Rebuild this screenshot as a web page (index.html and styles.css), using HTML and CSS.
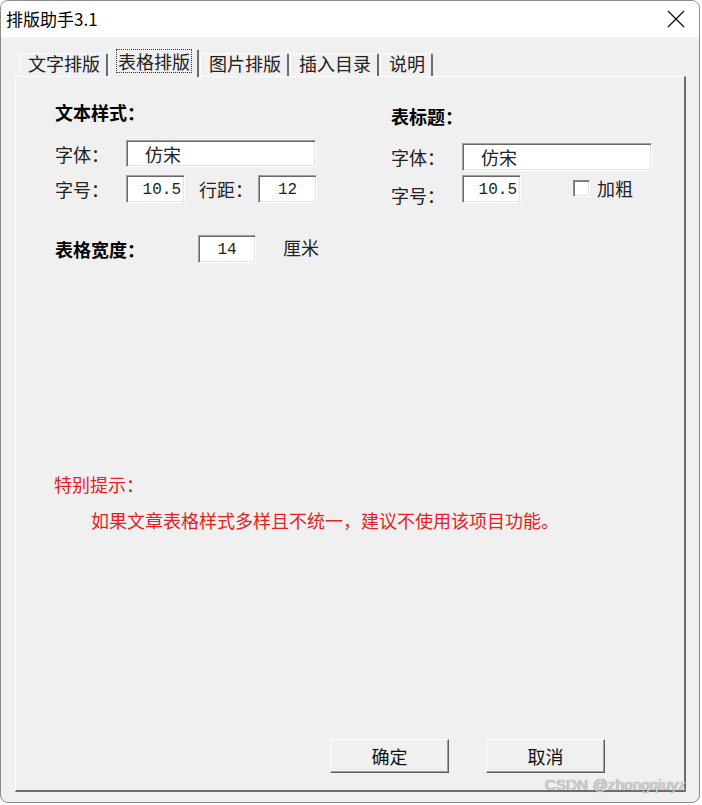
FILE: index.html
```html
<!DOCTYPE html>
<html lang="zh-CN">
<head>
    <meta charset="UTF-8">
    <meta name="viewport" content="width=device-width, initial-scale=1.0">
    <title>排版助手3.1</title>
    <link rel="stylesheet" href="styles.css">
</head>
<body>

    <div class="window">
        <div class="titlebar">
            <span class="title">排版助手3.1</span>
            <svg class="close" width="18" height="18" viewBox="0 0 18 18">
                <path d="M1 1 L17 17 M17 1 L1 17" stroke="#111" stroke-width="1.3" fill="none"/>
            </svg>
        </div>

        <div class="client">
            <div class="tabs">
                <div class="tab">文字排版</div>
                <div class="tab active"><span class="focus">表格排版</span></div>
                <div class="tab">图片排版</div>
                <div class="tab">插入目录</div>
                <div class="tab">说明</div>
            </div>

            <div class="panel">
                <div class="columns">
                    <div class="col">
                        <div class="heading">文本样式：</div>
                        <div class="row row-font">
                            <span class="label">字体：</span>
                            <div class="field wide">仿宋</div>
                        </div>
                        <div class="row row-size">
                            <span class="label">字号：</span>
                            <div class="field num right">10.5</div>
                            <span class="label label-gap">行距：</span>
                            <div class="field num center">12</div>
                        </div>
                    </div>

                    <div class="col col-right">
                        <div class="heading">表标题：</div>
                        <div class="row row-font">
                            <span class="label">字体：</span>
                            <div class="field wide">仿宋</div>
                        </div>
                        <div class="row row-size">
                            <span class="label label-low">字号：</span>
                            <div class="field num right">10.5</div>
                            <label class="check">
                                <span class="box"></span>
                                <span>加粗</span>
                            </label>
                        </div>
                    </div>
                </div>

                <div class="row width-row">
                    <span class="heading width-label">表格宽度：</span>
                    <div class="field num center">14</div>
                    <span class="unit">厘米</span>
                </div>

                <div class="tip-title">特别提示：</div>
                <div class="tip-text">如果文章表格样式多样且不统一，建议不使用该项目功能。</div>

                <div class="buttons">
                    <button type="button">确定</button>
                    <button type="button">取消</button>
                </div>

                <div class="watermark">CSDN @zhongqiuyz</div>
            </div>
        </div>
    </div>

</body>
</html>
```

FILE: styles.css
```css
body {
    margin: 0;
    padding: 0;
    background-color: #fff;
    font-family: "Noto Sans CJK SC", "Liberation Sans", sans-serif;
    color: #000;
}

.window {
    width: 700px;
    height: 803px;
    box-sizing: border-box;
    border: 1px solid #8c8c8c;
    border-radius: 8px;
    background-color: #f0f0f0;
    overflow: hidden;
}

.titlebar {
    height: 36px;
    background-color: #fff;
    display: flex;
    align-items: center;
    justify-content: space-between;
    padding: 0 14px 0 5px;
}

.title {
    font-size: 17px;
    line-height: 20px;
}

.client {
    padding-top: 12px;
}

/* tab strip */
.tabs {
    display: flex;
    align-items: flex-end;
    gap: 1px;
    margin-left: 18px;
    height: 27px;
    position: relative;
    z-index: 1;
}

.tab {
    height: 23px;
    box-sizing: border-box;
    padding: 0 6px 0 8px;
    font-size: 18px;
    line-height: 19px;
    color: #222;
    background-color: #f0f0f0;
    border-top: 1px solid #fff;
    border-left: 1px solid #fff;
    border-right: 2px solid #6d6d6d;
    border-radius: 2px 2px 0 0;
}

.tab.active {
    height: 28px;
    margin-bottom: -1px;
    padding: 1px 7px 0 8px;
    line-height: 20px;
}

.focus {
    display: inline-block;
    outline: 1px dotted #333;
    outline-offset: 1px;
    line-height: 20px;
}

/* tab page */
.panel {
    position: relative;
    margin-left: 14px;
    width: 671px;
    height: 716px;
    box-sizing: border-box;
    border-top: 1px solid #fff;
    border-left: 1px solid #fff;
    border-right: 2px solid #6d6d6d;
    border-bottom: 2px solid #6d6d6d;
    padding: 25px 0 17px 39px;
    display: flex;
    flex-direction: column;
    font-size: 18px;
}

.columns {
    display: grid;
    grid-template-columns: 336px 1fr;
}

.heading {
    font-weight: bold;
    line-height: 20px;
}

.col-right .heading {
    margin-top: 4px;
}

.row {
    display: flex;
    align-items: center;
}

.row-font {
    margin-top: 18px;
    height: 27px;
}

.row-size {
    margin-top: 8px;
    height: 28px;
}

.col-right .row-font {
    margin-top: 17px;
    height: 28px;
}

.col-right .row-size {
    margin-top: 4px;
}

.label {
    width: 71px;
    flex-shrink: 0;
    line-height: 20px;
    color: #222;
}

.label-gap {
    margin-left: 14px;
    width: 59px;
}

.label-low {
    padding-top: 12px;
}

.field {
    height: 100%;
    box-sizing: border-box;
    background-color: #fff;
    border: 1px solid;
    border-color: #a0a0a0 #fff #fff #a0a0a0;
    box-shadow: inset 1px 1px #696969, inset -1px -1px #e3e3e3;
    display: flex;
    align-items: center;
    line-height: 20px;
    color: #222;
}

.field.wide {
    width: 190px;
    padding-left: 18px;
}

.field.num {
    width: 59px;
    font-family: "Liberation Mono", monospace;
    font-size: 16px;
    padding: 1px 3px 0;
}

.field.right {
    justify-content: flex-end;
}

.field.center {
    justify-content: center;
}

.check {
    display: flex;
    align-items: center;
    gap: 7px;
    margin-left: 52px;
    margin-top: -2px;
    color: #222;
}

.box {
    width: 17px;
    height: 17px;
    box-sizing: border-box;
    background-color: #fff;
    border: 1px solid;
    border-color: #8a8a8a #fff #fff #8a8a8a;
    box-shadow: inset 1px 1px #777, inset -1px -1px #e3e3e3;
}

.width-row {
    margin-top: 32px;
    height: 28px;
}

.width-label {
    width: 143px;
}

.width-row .field.num {
    width: 58px;
}

.unit {
    margin-left: 27px;
    margin-top: -4px;
    color: #222;
}

.tip-title {
    margin-top: 211px;
    margin-left: -1px;
    line-height: 20px;
    color: #e42222;
}

.tip-text {
    margin-top: 16px;
    padding-left: 36px;
    line-height: 20px;
    color: #e42222;
}

.buttons {
    margin-top: auto;
    padding-left: 275px;
    display: flex;
    gap: 37px;
}

button {
    width: 119px;
    height: 34px;
    padding: 0;
    font-family: "Noto Sans CJK SC", sans-serif;
    font-size: 18px;
    color: #111;
    background-color: #f0f0f0;
    border: 1px solid;
    border-color: #fff #5f5f5f #5f5f5f #fff;
    box-shadow: inset -1px -1px #a0a0a0;
}

.watermark {
    position: absolute;
    right: -2px;
    bottom: -3px;
    font-family: "Liberation Sans", sans-serif;
    font-size: 15px;
    color: #d8d8d8;
    text-shadow: 0 0 1px #555;
    letter-spacing: 0.2px;
}
```
